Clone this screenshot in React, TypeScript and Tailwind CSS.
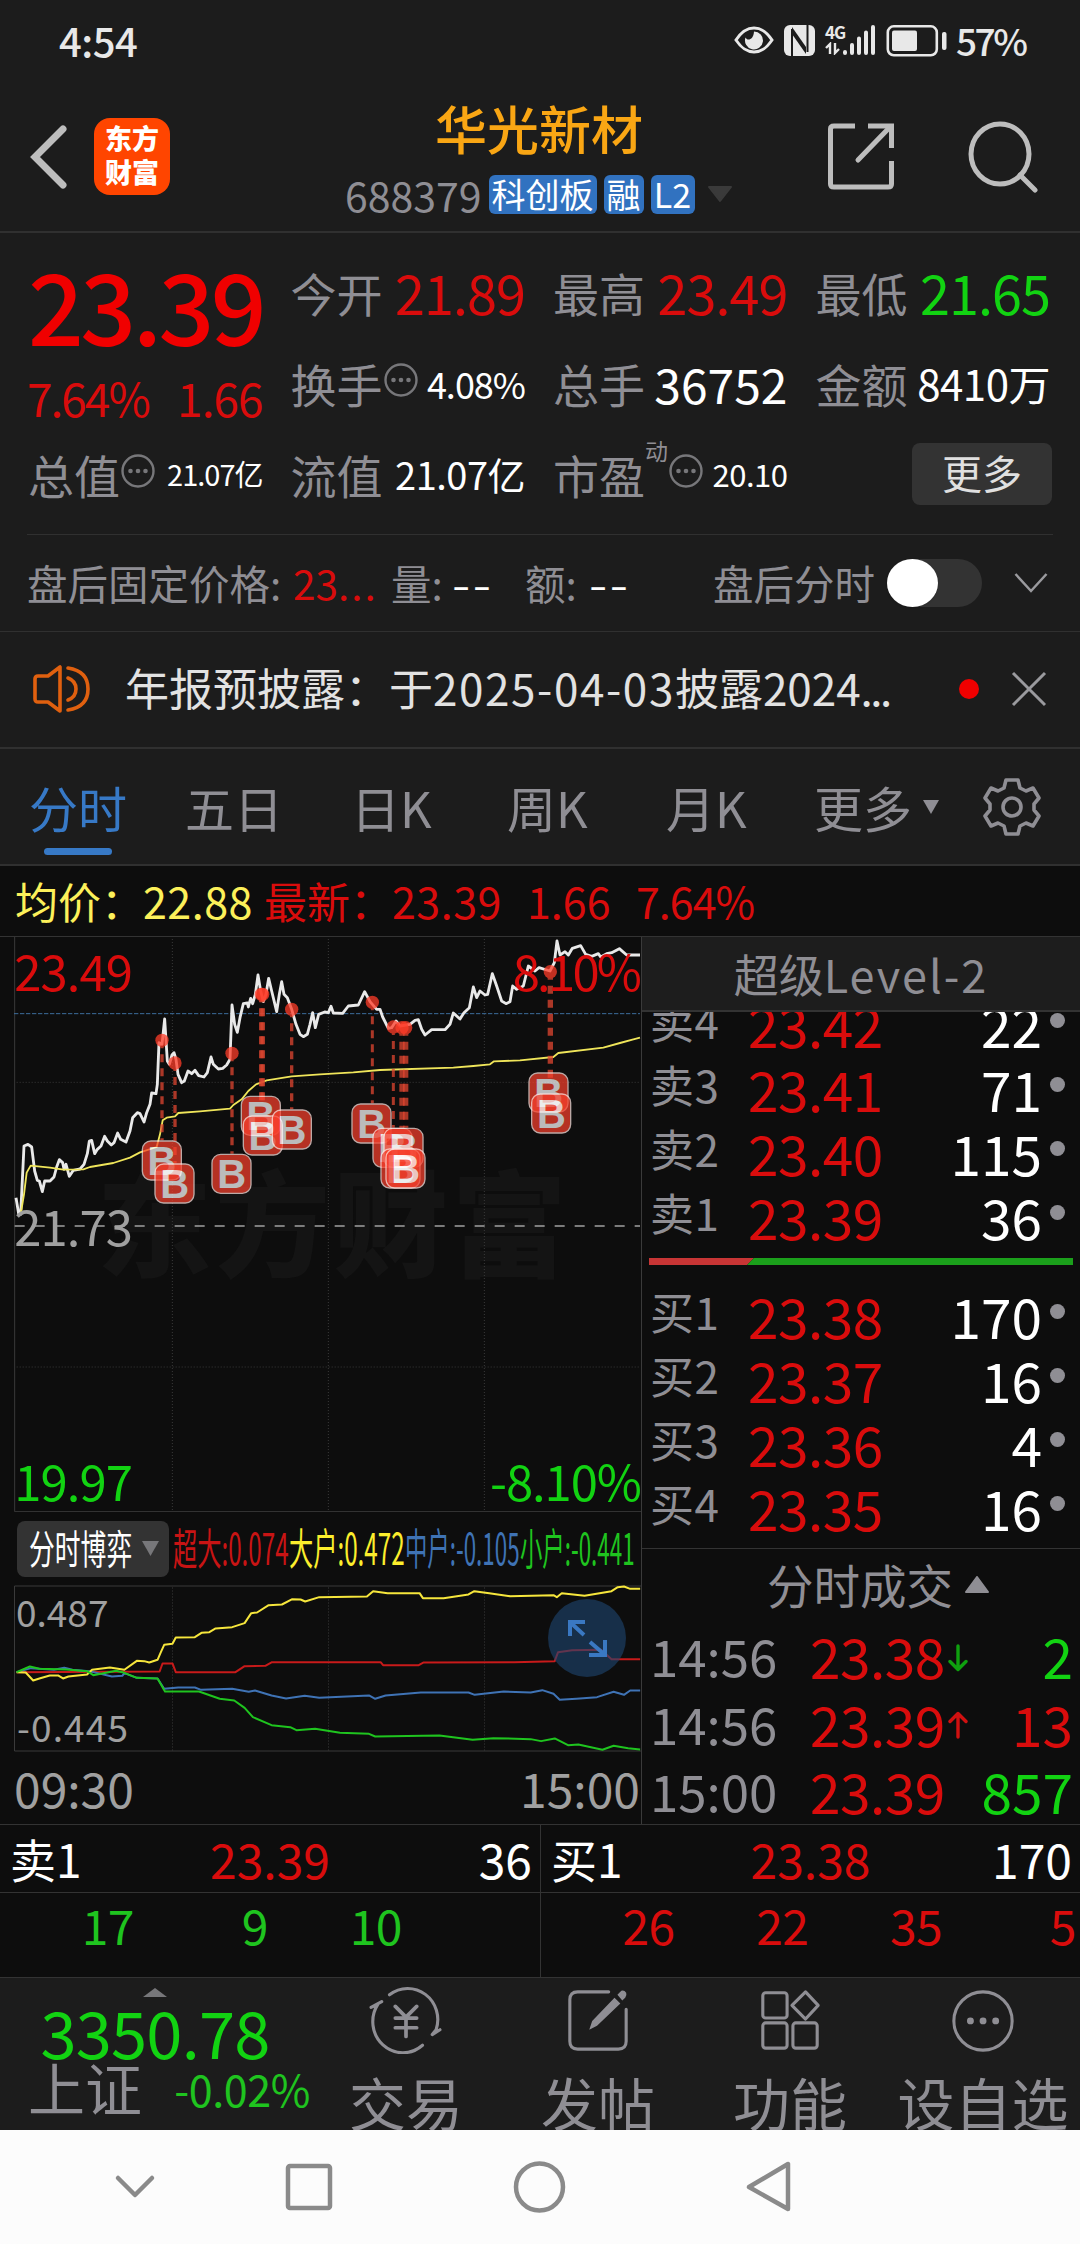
import type { ReactNode } from "react"

const sells = [
    { label: "卖4", price: "23.42", qty: "22" },
    { label: "卖3", price: "23.41", qty: "71" },
    { label: "卖2", price: "23.40", qty: "115" },
    { label: "卖1", price: "23.39", qty: "36" },
]

const buys = [
    { label: "买1", price: "23.38", qty: "170" },
    { label: "买2", price: "23.37", qty: "16" },
    { label: "买3", price: "23.36", qty: "4" },
    { label: "买4", price: "23.35", qty: "16" },
]

const trades = [
    { time: "14:56", price: "23.38", dir: "down", qty: "2", color: "text-[#12d312]" },
    { time: "14:56", price: "23.39", dir: "up", qty: "13", color: "text-[#d90c0c]" },
    { time: "15:00", price: "23.39", dir: "", qty: "857", color: "text-[#12d312]" },
]

// chart series, three units to a pixel
const priceLine =
    "48,800 56,848 62,850 72,645 84,640 95,648 104,720 112,748 118,750 127,782 134,750 150,750 162,738 170,708 178,686 188,695 192,715 198,700 208,736 220,718 240,714 252,700 262,668 268,630 275,628 284,668 292,655 303,645 314,616 322,630 334,642 342,635 353,606 362,625 378,633 390,600 398,560 412,545 420,548 432,573 440,545 450,520 455,486 468,488 472,460 477,335 486,340 494,264 502,390 508,400 516,372 522,365 528,385 534,430 545,455 553,450 564,420 575,428 585,418 596,434 612,438 622,425 633,378 640,400 655,414 668,412 680,402 690,385 696,222 704,280 712,304 720,260 730,218 742,216 745,228 752,202 758,218 766,190 774,132 782,180 790,212 798,190 806,142 815,180 830,242 838,190 845,152 852,190 862,200 875,235 888,280 900,310 910,317 922,310 930,280 938,245 946,290 956,250 974,243 985,245 993,226 1000,246 1028,247 1045,225 1075,222 1094,182 1110,212 1130,235 1140,235 1148,258 1165,292 1175,290 1188,270 1200,285 1230,280 1245,268 1255,266 1265,295 1275,312 1295,296 1335,296 1350,280 1360,246 1380,264 1392,245 1408,230 1420,168 1430,200 1440,180 1455,192 1463,190 1477,128 1490,165 1505,210 1518,218 1530,212 1538,165 1550,175 1570,165 1585,105 1605,120 1617,110 1650,120 1663,95 1671,30 1680,72 1695,62 1705,72 1717,52 1742,44 1757,70 1775,76 1795,68 1802,78 1820,68 1835,65 1858,53 1880,72 1920,72"

const averageLine =
    "62,850 72,790 80,725 92,704 150,710 190,716 250,715 270,708 340,696 390,680 420,664 470,648 480,610 488,568 500,560 525,556 535,546 600,541 690,533 700,522 725,505 745,480 768,460 800,448 875,436 960,430 1060,424 1140,417 1360,410 1420,405 1470,400 1482,391 1560,388 1660,378 1675,366 1810,350 1860,336 1900,325 1920,320"

const flows = [
    {
        color: "#c81a1a",
        points: "40,575 385,573 392,549 416,549 424,575 568,575 590,557 640,556 656,545 918,545 924,554 1010,554 1022,546 1240,545 1338,542 1346,515 1380,509 1450,508 1475,536 1544,536",
    },
    {
        color: "#3f73b5",
        points: "40,575 75,563 130,568 155,562 175,568 215,572 270,588 295,586 300,578 330,592 380,594 396,625 430,621 470,621 485,628 560,625 600,634 615,630 655,645 690,654 735,646 770,652 890,645 905,655 930,645 1015,636 1130,636 1145,643 1215,633 1280,636 1308,629 1335,640 1350,658 1390,655 1440,650 1480,634 1505,643 1520,630 1544,630",
    },
    {
        color: "#f6e63c",
        points: "40,575 62,576 80,600 95,594 120,585 140,585 152,594 165,588 210,582 222,568 265,561 300,568 330,541 348,542 360,546 380,538 388,515 396,493 416,490 424,471 470,470 486,457 505,455 520,444 560,440 590,428 606,398 620,396 648,374 680,372 705,356 725,357 736,363 770,350 885,348 900,332 935,338 1012,338 1020,353 1070,353 1130,342 1144,332 1180,338 1230,347 1335,344 1343,350 1355,338 1410,346 1475,332 1490,320 1505,318 1520,325 1544,325",
    },
    {
        color: "#1fc41f",
        points: "40,575 72,558 95,565 160,567 210,572 225,584 280,571 300,577 330,592 380,594 398,633 480,633 530,655 565,660 590,682 610,710 655,734 700,740 715,749 760,745 820,757 890,760 905,768 1060,765 1140,778 1190,773 1280,776 1305,782 1338,774 1370,794 1395,792 1453,808 1480,796 1515,803 1544,807",
    },
]

// dot on the line, stem down to the badge
const stems = [
    { x: 486, y: 328, end: 628, w: 10 },
    { x: 525, y: 396, end: 697, w: 10 },
    { x: 696, y: 367, end: 668, w: 10 },
    { x: 784, y: 190, end: 510, w: 14 },
    { x: 788, y: 190, end: 510, w: 14 },
    { x: 875, y: 235, end: 535, w: 10 },
    { x: 1117, y: 214, end: 517, w: 9 },
    { x: 1180, y: 288, end: 590, w: 9 },
    { x: 1206, y: 290, end: 590, w: 16 },
    { x: 1217, y: 290, end: 590, w: 16 },
    { x: 1651, y: 122, end: 440, w: 16 },
]

const badges = [
    [425, 628], [463, 697], [634, 668], [722, 494], [728, 553], [815, 535],
    [1054, 517], [1117, 590], [1150, 590], [1141, 652], [1156, 652],
    [1585, 424], [1593, 487],
]

function MoreDot() {
    return (
        <svg className="w-[34px] h-[34px] shrink-0 mb-1.5 ml-px" viewBox="0 0 34 34" fill="#77777a">
            <circle cx="17" cy="17" r="15.5" fill="none" stroke="#77777a" strokeWidth="2.4" />
            <circle cx="9.5" cy="17" r="2.3" />
            <circle cx="17" cy="17" r="2.3" />
            <circle cx="24.5" cy="17" r="2.3" />
        </svg>
    )
}

function Cell({ label, children }: { label: ReactNode; children: ReactNode }) {
    return (
        <div className="flex items-center justify-between whitespace-nowrap">
            <div className="-ml-[2px] flex items-center text-[46px] text-[#8f8e94]">{label}</div>
            {children}
        </div>
    )
}

function StatusBar() {
    return (
        <div className="h-20 flex items-center pl-[59px] text-[#e8e8e8]">
            <span className="text-[40px] font-medium tracking-[-0.5px]">4:54</span>
            <svg className="ml-auto w-[40px] h-[30px]" viewBox="0 0 40 30">
                <path d="M2 15C8 6 13 3 20 3s12 3 18 12c-6 9-11 12-18 12S8 24 2 15Z" fill="none" stroke="#e8e8e8" strokeWidth="3" />
                <path d="M20 6.500a9 9 0 1 1-8.500 6c1.500 3.500 8 3 8.500-6Z" fill="#e8e8e8" />
            </svg>
            <svg className="ml-2.5 w-[31px] h-[31px]" viewBox="0 0 31 31">
                <rect width="31" height="31" rx="6" fill="#e8e8e8" />
                <path d="M8 4V31M23.500 0V27" stroke="#1c1c1c" strokeWidth="2" />
                <path d="M8 2 22 22V29L8 9Z" fill="#1c1c1c" />
                <path d="M11.500 15 20 28h-8.500ZM20 16 11.500 3H20Z" fill="#e8e8e8" />
            </svg>
            <div className="ml-2.5 w-[51px] h-[34px] flex items-end">
                <div className="flex flex-col w-[17px] h-full">
                    <span className="w-[17px] text-[17px] leading-[17px] font-bold tracking-[-1px]">4G</span>
                    <svg className="w-[17px] h-[13px] mt-0.5" viewBox="0 0 17 13" stroke="#e8e8e8" strokeWidth="2.400" fill="none">
                        <path d="M1 6 5 2v10M10 1v10l4-4" />
                    </svg>
                </div>
                <svg className="w-[34px] h-[34px]" viewBox="0 0 34 34" stroke="#e8e8e8" strokeWidth="4" strokeLinecap="round">
                    <path d="M3 29v1M10 22v8M17 15.500V30M24 9.500V30M31 4v26" />
                </svg>
            </div>
            <svg className="ml-2.5 w-[62px] h-[34px] mt-[2px]" viewBox="0 0 62 34">
                <rect x="1.800" y="2.300" width="49" height="29" rx="6" fill="none" stroke="#e8e8e8" strokeWidth="2.600" />
                <rect x="6" y="6.500" width="25" height="20.500" rx="2" fill="#e8e8e8" />
                <rect x="56" y="8" width="4.500" height="18" rx="2" fill="#e8e8e8" />
            </svg>
            <span className="ml-[8px] w-[124px] text-[37px] font-medium tracking-[-2.500px]">57%</span>
        </div>
    )
}

function Header() {
    return (
        <div className="h-[153px] flex items-center pt-[2px] border-b-2 border-[#303030]">
            <svg className="ml-[30px] w-[37px] h-16" viewBox="0 0 37 64">
                <path d="M33 4 5 32l28 28" fill="none" stroke="#bdbdbd" strokeWidth="7" strokeLinecap="round" />
            </svg>
            <div className="ml-[27px] w-[76px] h-[77px] rounded-[16px] bg-[#ff4500] text-white text-[27px] leading-[34px] font-black text-center pt-[3px]">
                东方<br />财富
            </div>
            <div className="ml-[175px] w-[388px] mt-[4px] flex flex-col items-center gap-[20px]">
                <h1 className="text-[52px] font-medium text-[#f9a614]">华光新材</h1>
                <div className="flex items-center w-full">
                    <span className="text-[41px] text-[#8f8e94]">688379</span>
                    <div className="ml-[7px] flex gap-[7px] text-[34px] leading-[37px] text-white text-center">
                        <span className="w-[108px] h-[39px] rounded-md bg-[#3172c0]">科创板</span>
                        <span className="w-[40px] h-[39px] rounded-md bg-[#3172c0]">融</span>
                        <span className="w-[44px] h-[39px] rounded-md bg-[#3172c0]">L2</span>
                    </div>
                    <svg className="ml-[12px] w-[26px] h-[17px]" viewBox="0 0 26 17">
                        <path d="M2 1h22L13 15Z" fill="#3a3a3a" stroke="#3a3a3a" strokeLinejoin="round" strokeWidth="2" />
                    </svg>
                </div>
            </div>
            <svg className="ml-[95px] w-[66px] h-[67px]" viewBox="0 0 66 67" fill="none" stroke="#bdbdbd" strokeWidth="5">
                <path d="M27 3H6Q2.500 3 2.500 6V61Q2.500 64 6 64H60Q63.500 64 63.500 61V38" />
                <path d="M40 3H63.500V25" />
                <path d="M62 4 30 37" strokeLinecap="round" />
            </svg>
            <svg className="ml-[74px] w-[70px] h-[74px]" viewBox="0 0 70 74" fill="none" stroke="#bdbdbd" strokeWidth="5">
                <ellipse cx="32" cy="34" rx="29" ry="30" />
                <path d="M52 55 67 70" strokeLinecap="round" />
            </svg>
        </div>
    )
}

function Quote() {
    return (
        <div className="h-[301px] px-[30px] pt-[13px] grid grid-cols-4 grid-rows-[91px_91px_91px] gap-x-[30px] content-start">
            <div className="row-span-2 text-[#d90c0c] whitespace-nowrap">
                <div className="pt-[8px] -ml-[2px] text-[98px] font-medium tracking-[-3.500px] text-[#f00000]">23.39</div>
                <div className="mt-[22px] -ml-[3px] flex justify-between text-[46px]">
                    <span className="tracking-[-2px]">7.64%</span>
                    <span className="tracking-[-1px]">1.66</span>
                </div>
            </div>
            <Cell label="今开"><span className="text-[54px] tracking-[-1px] text-[#d90c0c]">21.89</span></Cell>
            <Cell label="最高"><span className="text-[54px] tracking-[-1px] text-[#d90c0c]">23.49</span></Cell>
            <Cell label="最低"><span className="text-[54px] tracking-[-1px] text-[#12d312]">21.65</span></Cell>
            <Cell label={<>换手<MoreDot /></>}><span className="text-[36px] tracking-[-1px]">4.08%</span></Cell>
            <Cell label="总手"><span className="text-[48px]">36752</span></Cell>
            <Cell label="金额"><span className="text-[42px] tracking-[-0.500px]">8410万</span></Cell>
            <Cell label={<>总值<MoreDot /></>}><span className="text-[29px] tracking-[-1px]">21.07亿</span></Cell>
            <Cell label="流值"><span className="text-[38px] tracking-[-0.500px]">21.07亿</span></Cell>
            <Cell
                label={
                    <>
                        市盈
                        <span className="self-start -mt-3 text-[23px]">动</span>
                        <MoreDot />
                    </>
                }
            >
                <span className="text-[31px] tracking-[-0.500px]">20.10</span>
            </Cell>
            <div className="flex items-center justify-end">
                <button className="w-[140px] h-[62px] -mr-[2px] rounded-lg bg-[#333] text-[40px] text-[#e0e0e0] pb-1">更多</button>
            </div>
        </div>
    )
}

function AfterHours() {
    return (
        <>
            <div className="mx-[27px] h-px bg-[#303030]" />
            <div className="h-[96px] flex items-center pl-[27px] text-[40.500px] text-[#8f8e94] whitespace-nowrap">
                <span className="w-[266px]">盘后固定价格:</span>
                <span className="w-[98px] text-[#d90c0c]">23<span className="tracking-[2px]">...</span></span>
                <span className="w-[61px]">量:</span>
                <DoubleDash />
                <span className="w-[64px] ml-[33px]">额:</span>
                <DoubleDash />
                <span className="w-[174px] ml-[84px]">盘后分时</span>
                <div className="w-[95px] h-[48px] rounded-full bg-[#333]">
                    <div className="w-[51px] h-[48px] rounded-[50%] bg-white shadow" />
                </div>
                <svg className="ml-[32px] w-[34px] h-[22px]" viewBox="0 0 34 22">
                    <path d="M1.500 2 17 19 32.500 2" fill="none" stroke="#9a9a9e" strokeWidth="2.500" />
                </svg>
            </div>
            <div className="h-px bg-[#303030]" />
        </>
    )
}

function DoubleDash() {
    return (
        <span className="w-[40px] text-white">
            <span className="inline-block origin-left scale-x-[1.3] tracking-[2px]">--</span>
        </span>
    )
}

function Notice() {
    return (
        <div className="h-[117px] flex items-center pl-[33px] pb-[2px] border-b-2 border-[#303030] whitespace-nowrap">
            <svg className="w-[58px] h-[50px]" viewBox="0 0 58 50" fill="none" stroke="#e0600f" strokeWidth="3.600" strokeLinejoin="round" strokeLinecap="round">
                <path d="M27 3v44L15 38H5q-3 0-3-3V15q0-3 3-3H15Z" />
                <path d="M35 14q8 3 8 11t-8 11" />
                <path d="M35 4q20 3 20 21T35 46" />
            </svg>
            <span className="ml-[34px] w-[834px] pb-[3px] text-[44px] text-[#e2e2e2]">
                年报预披露：于<span className="tracking-[1.600px]">2025-04-03</span>披露2024<span className="tracking-[-2.500px]">...</span>
            </span>
            <span className="w-5 h-5 rounded-full bg-[#f00000]" />
            <svg className="ml-[32px] w-[36px] h-[36px]" viewBox="0 0 36 36">
                <path d="M2 2 34 34M34 2 2 34" stroke="#9a9a9e" strokeWidth="3" />
            </svg>
        </div>
    )
}

function Tabs() {
    return (
        <div className="h-[117px] flex items-center pl-[29px] border-b-2 border-[#303030] text-[49px] text-[#8f8e94] whitespace-nowrap">
            <div className="relative w-[156px] text-[#3779c6]">
                分时
                <span className="absolute left-[15px] top-[66px] w-[68px] h-[7px] rounded-full bg-[#3779c6]" />
            </div>
            <span className="w-[166px]">五日</span>
            <span className="w-[156px]">日K</span>
            <span className="w-[159px]">周K</span>
            <span className="w-[148px]">月K</span>
            <span className="w-[108px]">更多</span>
            <svg className="w-[18px] h-[14px]" viewBox="0 0 18 14">
                <path d="M1 0H17L9 14Z" fill="#8f8e94" />
            </svg>
            <svg className="ml-[42px] w-[60px] h-[60px]" viewBox="0 0 60 60" fill="none" stroke="#8f8e94" strokeWidth="3.600" strokeLinejoin="round">
                <path d="M24 3H36L38 11L44 14L51 11L57 21L52 27V33L57 39L51 49L44 46L38 49L36 57H24L22 49L16 46L9 49L3 39L8 33V27L3 21L9 11L16 14L22 11Z" />
                <circle cx="30" cy="30" r="9" />
            </svg>
        </div>
    )
}

function InfoLine() {
    return (
        <div className="h-[70px] flex items-center pl-[15px] pb-[2px] bg-[#0d0d0d] text-[43px] text-[#d90c0c] whitespace-nowrap">
            <span className="w-[128px] text-[#fcf05a]">均价：</span>
            <span className="w-[121px] text-[#fcf05a] tracking-[0.500px]">22.88</span>
            <span className="w-[128px]">最新：</span>
            <span className="w-[135px] tracking-[0.500px]">23.39</span>
            <span className="w-[109px]">1.66</span>
            <span className="tracking-[-1px]">7.64%</span>
        </div>
    )
}

function PriceChart() {
    return (
        <svg className="block w-[641px] h-[575px]" viewBox="0 18 1923 1725">
            <text x="290" y="1012" fontSize="345" fontWeight="900" fill="#141414" textLength="1410">东方财富</text>
            <g stroke="#3a3a3a" strokeWidth="3" fill="none">
                <path d="M44 18V1742H1923" />
                <path d="M517 24V1740M985 24V1740M1453 24V1740M50 454H1920M50 1308H1920" strokeDasharray="3 6" />
            </g>
            <path d="M42 248H1920" stroke="#3c6c9c" strokeWidth="3" strokeDasharray="13 5" />
            <path d="M44 885H1920" stroke="#a0a0a0" strokeWidth="5" strokeDasharray="30 30" />
            <polyline points={priceLine} fill="none" stroke="#e9e9e9" strokeWidth="8.5" strokeLinejoin="round" />
            <polyline points={averageLine} fill="none" stroke="#efe55a" strokeWidth="5.5" strokeLinejoin="round" />
            {stems.map((s, i) => (
                <g key={i} opacity="0.75">
                    <path d={`M${s.x} ${s.y}V${s.end}`} stroke="#e04630" strokeWidth={s.w} strokeDasharray="24 18" />
                    <circle cx={s.x} cy={s.y} r="20" fill="#ff3c28" />
                </g>
            ))}
            {badges.map(([x, y], i) => (
                <g key={i} opacity="0.72">
                    <rect x={x + 2} y={y + 2} width="117" height="117" rx="26" fill="#f8402c" stroke="#ffe4e0" strokeWidth="4" />
                    <text x={x + 61} y={y + 104} fontSize="120" fontWeight="700" fontFamily="Liberation Sans, sans-serif" textAnchor="middle" fill="#fff">B</text>
                </g>
            ))}
            <g fontSize="147">
                <text x="43" y="180" fill="#d90c0c" textLength="356">23.49</text>
                <text x="1926" y="180" fill="#d90c0c" textAnchor="end" textLength="388">8.10%</text>
                <text x="43" y="944" fill="#a0a0a0" textLength="356">21.73</text>
                <text x="43" y="1710" fill="#12d312" textLength="356">19.97</text>
                <text x="1926" y="1710" fill="#12d312" textAnchor="end" textLength="456">-8.10%</text>
            </g>
        </svg>
    )
}

function FlowChart() {
    return (
        <div className="relative">
            <svg className="block w-[641px] h-[167px]" viewBox="0 104.500 641 167" fill="none">
                <path d="M641 105.500H14.500V270.500H641" stroke="#3a3a3a" />
                <path d="M172.500 107V270M328.500 107V270M484.500 107V270" stroke="#3a3a3a" strokeDasharray="1 2" />
                <g transform="scale(0.4146 0.3333)">
                    {flows.map((f) => (
                        <polyline key={f.color} points={f.points} stroke={f.color} strokeWidth="2" vectorEffect="non-scaling-stroke" strokeLinejoin="round" />
                    ))}
                </g>
                <g fontSize="37" fill="#a0a0a0">
                    <text x="16" y="146">0.487</text>
                    <text x="17" y="261" textLength="111">-0.445</text>
                </g>
            </svg>
            <div className="absolute left-[548px] top-[14px] w-[78px] h-[78px] rounded-full bg-[#1e4672]/60">
                <svg className="w-full h-full" viewBox="0 0 78 78" fill="none" stroke="#3a78c2" strokeWidth="4">
                    <path d="M22 37V23H37M23 24 36 36" />
                    <path d="M57 41V56H41M56 55 42 43" />
                </svg>
            </div>
        </div>
    )
}

function FlowLegend() {
    return (
        <div className="h-[73px] flex items-center pl-[17px] text-[43px] whitespace-nowrap">
            <div className="w-[152px] h-[56px] mr-[4px] flex items-center rounded-lg bg-[#333] pl-[12px] pb-1">
                <span className="w-[113px] text-[40px] text-white"><span className="inline-block origin-left scale-x-[0.645]">分时博弈</span></span>
                <svg className="w-[17px] h-[15px] shrink-0 mt-1" viewBox="0 0 17 15">
                    <path d="M0 0H17L8.500 15Z" fill="#77777a" />
                </svg>
            </div>
            <span className="w-[116px] pb-1 text-[#c81414]"><span className="inline-block origin-left scale-x-[0.563]">超大:0.074</span></span>
            <span className="w-[116px] pb-1 text-[#fcee2c]"><span className="inline-block origin-left scale-x-[0.563]">大户:0.472</span></span>
            <span className="w-[115px] pb-1 text-[#3f73b5]"><span className="inline-block origin-left scale-x-[0.520]">中户:-0.105</span></span>
            <span className="w-[116px] pb-1 text-[#1fc41f]"><span className="inline-block origin-left scale-x-[0.520]">小户:-0.441</span></span>
        </div>
    )
}

function BookRow({ label, price, qty }: { label: string; price: string; qty: string }) {
    return (
        <div className="h-16 flex items-center pl-[8px] text-[55px]">
            <span className="w-[98px] pb-[9px] text-[44px] tracking-[0.500px] text-[#8f8e94]">{label}</span>
            <span className="text-[#d90c0c] tracking-[-0.500px]">{price}</span>
            <span className="ml-auto mr-[8px] text-white">{qty}</span>
            <span className="w-[15px] h-[15px] mb-2 mr-[15px] rounded-full bg-[#8f8e94]" />
        </div>
    )
}

function OrderBook() {
    return (
        <div className="w-[439px] border-l border-[#3a3a3a]">
            <div className="h-[75px] flex items-center justify-center bg-[#1d1d1d] border-b-2 border-[#333] text-[45px] text-[#8f8e94]">
                超级<span className="tracking-[2px]">Level-2</span>
            </div>
            <div className="h-[537px] overflow-hidden border-b border-[#333]">
                <div className="-mt-[20px]">
                    {sells.map((row) => <BookRow key={row.label} {...row} />)}
                </div>
                <svg className="block mt-[10px] mb-[18px] ml-[7px] w-[424px] h-[7px]" viewBox="0 0 424 7">
                    <path d="M0 0H105L98 7H0Z" fill="#c73535" />
                    <path d="M105 0H424V7H98Z" fill="#1b9f1b" />
                </svg>
                {buys.map((row) => <BookRow key={row.label} {...row} />)}
            </div>
            <div className="h-[72px] flex items-center pl-[125px] pb-[2px] text-[46.500px] text-[#8f8e94]">
                分时成交
                <svg className="ml-[12px] w-[24px] h-[17px]" viewBox="0 0 24 17">
                    <path d="M1 16H23L12 1Z" fill="#8f8e94" stroke="#8f8e94" strokeLinejoin="round" strokeWidth="2" />
                </svg>
            </div>
            {trades.map((t, i) => (
                <div key={i} className="h-[67.500px] flex items-center pl-[8px] pr-[7px] pt-[2px] text-[55px]">
                    <span className="w-[160px] text-[51px] text-[#8f8e94]">{t.time}</span>
                    <span className="text-[#d90c0c] tracking-[-0.500px]">{t.price}</span>
                    {t.dir && (
                        <svg className="ml-[3px] mt-1 w-[20px] h-[28px]" viewBox="0 0 20 28" fill="none" strokeWidth="3.400" strokeLinecap="round" strokeLinejoin="round">
                            {t.dir === "down"
                                ? <path d="M10 2V25M2 17.500 10 25.500 18 17.500" stroke="#0fa00f" />
                                : <path d="M10 26V3M2 10.500 10 2.500 18 10.500" stroke="#d01010" />}
                        </svg>
                    )}
                    <span className={"ml-auto " + t.color}>{t.qty}</span>
                </div>
            ))}
        </div>
    )
}

function QueueHalf({ label, price, qty, items, color }: { label: string; price: string; qty: string; items: string[]; color: string }) {
    return (
        <div className="w-[540px] border-l border-[#333] first:border-l-0">
            <div className="h-[68px] grid grid-cols-3 items-center px-[10px] pb-[2px] border-b border-[#333] text-[48px] text-white">
                <span className="text-[46px]">{label}</span>
                <span className="text-center text-[#d90c0c]">{price}</span>
                <span className="text-right mr-[-2px]">{qty}</span>
            </div>
            <div className={"h-[84px] grid grid-cols-4 pr-[4px] pt-[7px] text-right text-[48px] tracking-[-0.500px] " + color}>
                {items.map((n) => <span key={n}>{n}</span>)}
            </div>
        </div>
    )
}

function BottomTab({ label, width, children }: { label: string; width: string; children: ReactNode }) {
    return (
        <div className={"flex flex-col items-center shrink-0 whitespace-nowrap " + width}>
            <svg className="mt-[8px] w-[74px] h-[70px]" viewBox="0 0 74 70" fill="none" stroke="#8f8e94" strokeWidth="3.200" strokeLinejoin="round" strokeLinecap="round">
                {children}
            </svg>
            <span className="mt-[19px] text-[57px]">{label}</span>
        </div>
    )
}

function BottomBar() {
    return (
        <div className="h-[152px] flex overflow-hidden text-[#8f8e94]">
            <div className="w-[310px] shrink-0 flex flex-col items-center">
                <svg className="mt-[10px] w-[24px] h-[9px]" viewBox="0 0 24 9">
                    <path d="M0 9H24L12 0Z" fill="#77777a" />
                </svg>
                <span className="mt-[2px] text-[65px] tracking-[-0.800px] text-[#12d312]">3350.78</span>
                <div className="w-full pl-[28px] -mt-[6px] flex items-center justify-between">
                    <span className="text-[57px]">上证</span>
                    <span className="pt-[4px] text-[43px] tracking-[-0.400px] text-[#1fc41f]">-0.02%</span>
                </div>
            </div>
            <BottomTab label="交易" width="w-[192px]">
                <path d="M20 9a31 32 0 0 1 48 36l-4 5 8-5M54 61A31 32 0 0 1 8 19L1 22l11-6" />
                <path d="M26 21 37 32 48 21M37 32V52M26 33H48M26 43H48" strokeWidth="3.800" />
            </BottomTab>
            <BottomTab label="发帖" width="w-[192px]">
                <path d="M48 6H16Q8 6 8 14V57Q8 65 16 65H58Q66 65 66 57V24" />
                <path d="M28 45 31 36 54 12 60 18 36 41Z M57 9 61 5Q64 4 66 7 67 10 65 12L62 15Z" fill="#8f8e94" stroke="none" />
            </BottomTab>
            <BottomTab label="功能" width="w-[192px]">
                <rect x="9" y="7" width="25" height="26" rx="3" />
                <rect x="9" y="38" width="25" height="26" rx="3" />
                <rect x="40" y="38" width="25" height="26" rx="3" />
                <path d="M53 6 66 20 53 34 39 20Z" />
            </BottomTab>
            <BottomTab label="设自选" width="w-[194px]">
                <circle cx="37" cy="36" r="30" />
                <path d="M24 36h.1M37 36h.1M50 36h.1" strokeWidth="7" />
            </BottomTab>
        </div>
    )
}

function NavBar() {
    return (
        <div className="h-[114px] bg-[#fcfcfc]">
            <svg className="block w-full h-full" viewBox="0 0 1080 114" fill="none" stroke="#8a8a8a" strokeWidth="4.500" strokeLinejoin="round" strokeLinecap="round">
                <path d="M118 48 135 65 152 48" />
                <rect x="288" y="36" width="42" height="42" rx="2" />
                <circle cx="539.500" cy="57" r="23.500" />
                <path d="M788 34V79L749 57Z" />
            </svg>
        </div>
    )
}

export default function App() {
    return (
        <div className="w-[1080px] h-[2244px] overflow-hidden bg-[#1c1c1c] font-['Noto_Sans_CJK_SC',sans-serif] leading-none text-white">
            <StatusBar />
            <Header />
            <Quote />
            <AfterHours />
            <Notice />
            <Tabs />
            <InfoLine />
            <div className="flex h-[889px] bg-[#0d0d0d] border-y border-[#333]">
                <div className="w-[641px]">
                    <PriceChart />
                    <FlowLegend />
                    <FlowChart />
                    <div className="h-[72px] flex items-center justify-between pl-[14px] pr-[1px] pb-[2px] text-[48px] text-[#a0a0a0]">
                        <span>09:30</span>
                        <span>15:00</span>
                    </div>
                </div>
                <OrderBook />
            </div>
            <div className="flex bg-[#0d0d0d] border-b border-[#333]">
                <QueueHalf label="卖1" price="23.39" qty="36" items={["17", "9", "10"]} color="text-[#1fc41f]" />
                <QueueHalf label="买1" price="23.38" qty="170" items={["26", "22", "35", "5"]} color="text-[#d90c0c]" />
            </div>
            <BottomBar />
            <NavBar />
        </div>
    )
}
